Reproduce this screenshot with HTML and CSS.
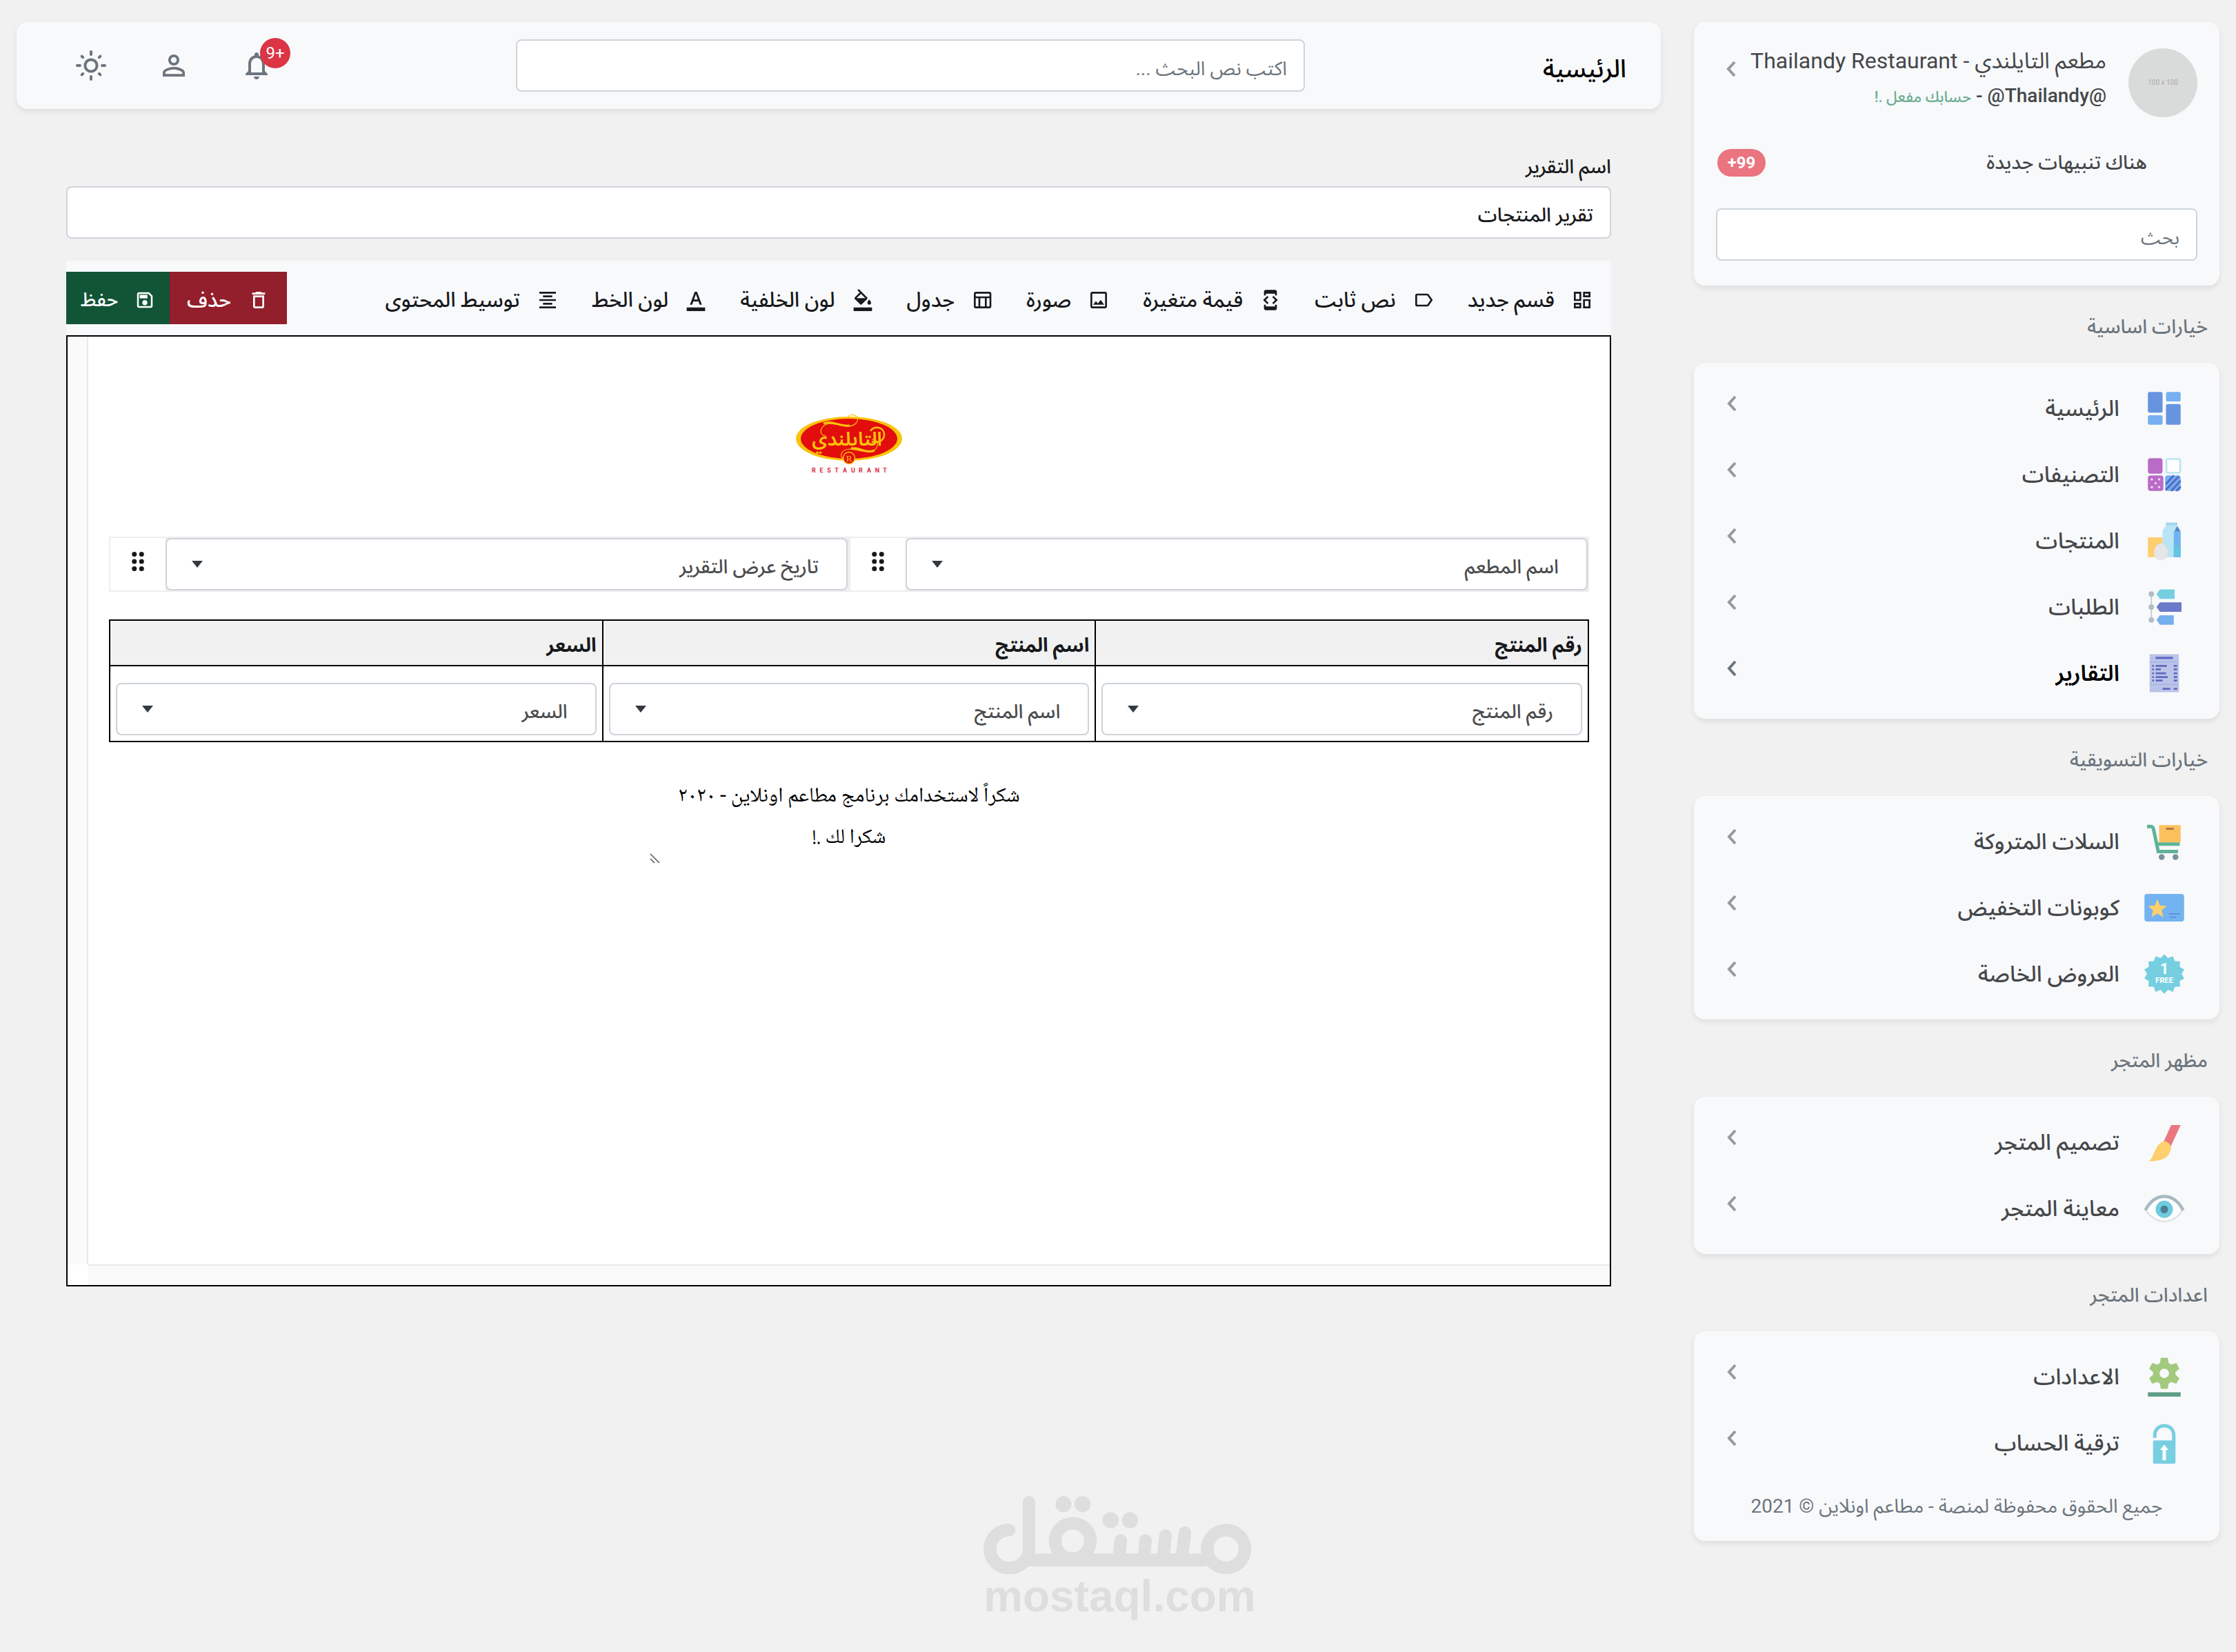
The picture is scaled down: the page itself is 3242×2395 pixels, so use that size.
FILE: index.html
```html
<!DOCTYPE html>
<html lang="ar" dir="rtl">
<head>
<meta charset="utf-8">
<meta name="viewport" content="width=device-width, initial-scale=1">
<title>التقارير - مطاعم اونلاين</title>
<link rel="stylesheet" href="styles.css">
</head>
<body>
<svg class="defs" aria-hidden="true">
  <symbol id="chev" viewBox="0 0 14 24"><path d="M12 2 3 12l9 10" fill="none" stroke="currentColor" stroke-width="4"/></symbol>
  <symbol id="drag" viewBox="0 0 24 24"><g fill="currentColor"><circle cx="9" cy="6" r="2"/><circle cx="15" cy="6" r="2"/><circle cx="9" cy="12" r="2"/><circle cx="15" cy="12" r="2"/><circle cx="9" cy="18" r="2"/><circle cx="15" cy="18" r="2"/></g></symbol>
</svg>

<div class="app">
  <aside class="sidebar">
    <section class="card account">
      <div class="profile">
        <span class="avatar" dir="ltr">100 x 100</span>
        <div class="who">
          <p class="name">مطعم التايلندي - Thailandy Restaurant</p>
          <p class="handle">@Thailandy@ - <span class="active">حسابك مفعل .!</span></p>
        </div>
        <svg class="chev"><use href="#chev"/></svg>
      </div>
      <a class="alerts" href="#alerts"><span>هناك تنبيهات جديدة</span><span class="pill">99+</span></a>
      <input class="field" type="search" placeholder="بحث" aria-label="بحث">
    </section>

    <h2 class="group">خيارات اساسية</h2>
    <nav class="card menu">
      <a class="item" href="#home">
        <svg class="pic" viewBox="0 0 48 48"><g fill="#76b0f1"><rect x="26" y="5" width="17" height="11" rx="2"/><rect x="5" y="32" width="17" height="11" rx="2"/></g><g fill="#6794df"><rect x="5" y="5" width="17" height="24" rx="2"/><rect x="26" y="19" width="17" height="24" rx="2"/></g></svg>
        <span>الرئيسية</span><svg class="chev"><use href="#chev"/></svg></a>
      <a class="item" href="#categories">
        <svg class="pic" viewBox="0 0 48 48"><rect x="5" y="5" width="17" height="18" rx="3" fill="#ba6bc8"/><rect x="26.500" y="6" width="16" height="16" rx="2" fill="#fff" stroke="#b8e4f4" stroke-width="2"/><rect x="5" y="25" width="18" height="18" rx="3" fill="#ba6bc8"/><g fill="#f3e0f6"><circle cx="9.500" cy="29.500" r="1.300"/><circle cx="18" cy="29.500" r="1.300"/><circle cx="14" cy="34" r="1.300"/><circle cx="9.500" cy="38.500" r="1.300"/><circle cx="18" cy="38.500" r="1.300"/></g><rect x="25" y="25" width="18" height="18" rx="3" fill="#72aef0"/><path d="M26 35l9-10M25.500 42 41 26M32 43l11-12M38 43l5-5" stroke="#5768c0" stroke-width="2.200"/></svg>
        <span>التصنيفات</span><svg class="chev"><use href="#chev"/></svg></a>
      <a class="item" href="#products">
        <svg class="pic" viewBox="0 0 48 48"><path d="M5 20h17v23H5z" fill="#fdcf70"/><path d="M26 3h13v4l4 7v29H22V12l4-6z" fill="#b9e4f5"/><path d="M26 3h13v3H26z" fill="#9fd8ee"/><path d="M35 14l4-7 4 7v29h-8z" fill="#6fb4ee"/><path d="M36 13l3-6 4 6z" fill="#5a84cf"/><path d="M35 30h8v13h-8z" fill="#66c3e4"/><path d="M20 27c5 0 8 7 8 11 0 5-3 8.500-8 8.500s-8-3.500-8-8.500c0-4 3-11 8-11z" fill="#e6e6e6"/></svg>
        <span>المنتجات</span><svg class="chev"><use href="#chev"/></svg></a>
      <a class="item" href="#orders">
        <svg class="pic" viewBox="0 0 48 48"><path d="M9 10v28" stroke="#c5ccd2" stroke-width="1.500"/><g fill="#b0bec5"><circle cx="9" cy="9" r="3.200"/><circle cx="9" cy="24" r="3.200"/><circle cx="9" cy="39" r="3.200"/></g><path d="M19 3.500h17v11H19l-4-5.500z" fill="#76cfe0"/><path d="M19 18.500h25v11H19L15 24z" fill="#6a79c8"/><path d="M19 33.500h16v11H19L15 39z" fill="#74afef"/></svg>
        <span>الطلبات</span><svg class="chev"><use href="#chev"/></svg></a>
      <a class="item current" href="#reports" aria-current="page">
        <svg class="pic" viewBox="0 0 48 48"><path d="M7 2h34v44H7z" fill="#bcc3e8"/><path d="M14 5h20v2.500H14z" fill="#5c6bc0"/><path d="M7 11h34M7 37h34" stroke="#7fa6e6" stroke-dasharray="1 1"/><path d="M10 15.500h2m2 0h13m8 0h4M10 19.500h2m2 0h6m15 0h4M10 24h2m2 0h12m9 0h4M10 28.500h2m2 0h14m7 0h4M10 32.500h2m2 0h8m13 0h4M22 42h9m4 0h4" stroke="#5c6bc0" stroke-width="2.200"/></svg>
        <span>التقارير</span><svg class="chev"><use href="#chev"/></svg></a>
    </nav>

    <h2 class="group">خيارات التسويقية</h2>
    <nav class="card menu">
      <a class="item" href="#carts">
        <svg class="pic" viewBox="0 0 48 48"><path d="M18 5h25v20H18z" fill="#fcc15c"/><path d="M26 8h9v2.500h-9z" fill="#b5764a"/><path d="M4 6.500h4.500c2 0 2.500 1 3 3L17 35.500h23" fill="none" stroke="#5fb399" stroke-width="4"/><path d="M16 27h26" stroke="#5fb399" stroke-width="4"/><circle cx="21" cy="42" r="3.400" fill="#78909c"/><circle cx="37" cy="42" r="3.400" fill="#78909c"/></svg>
        <span>السلات المتروكة</span><svg class="chev"><use href="#chev"/></svg></a>
      <a class="item" href="#coupons">
        <svg class="pic" viewBox="0 0 48 48"><rect x="1" y="8" width="46" height="32" rx="3" fill="#74b3f1"/><path d="M16 14l3 7.300 8 .6-6.100 5.100 2 7.900L16 30.600l-6.900 4.300 2-7.900L5 21.900l8-.6z" fill="#fdd06c"/><path d="M29 31h13M30 35h8" stroke="#5580d0"/></svg>
        <span>كوبونات التخفيض</span><svg class="chev"><use href="#chev"/></svg></a>
      <a class="item" href="#offers">
        <svg class="pic" viewBox="0 0 48 48"><path fill="#76cfe1" d="M24 1l4.200 4.600 5.900-2.300 2 5.700 6.300.5-.5 6.300 5.200 3-3 5.200 3 5.200-5.200 3 .5 6.300-6.300.5-2 5.700-5.900-2.300L24 47l-4.200-4.600-5.900 2.300-2-5.700-6.300-.5.500-6.300-5.200-3 3-5.200-3-5.200 5.200-3-.5-6.300 6.300-.5 2-5.700 5.900 2.300z"/><text x="24" y="24" class="offer-one">1</text><text x="24" y="34" class="offer-free">FREE</text></svg>
        <span>العروض الخاصة</span><svg class="chev"><use href="#chev"/></svg></a>
    </nav>

    <h2 class="group">مظهر المتجر</h2>
    <nav class="card menu">
      <a class="item" href="#design">
        <svg class="pic" viewBox="0 0 48 48"><path d="M32 4h11L31 30l-8-6z" fill="#ec7680"/><path d="M23 23c3-1 9 3 9 7-2 11-8 16-26 16 7-4 6-19 17-23z" fill="#fdcf6e"/></svg>
        <span>تصميم المتجر</span><svg class="chev"><use href="#chev"/></svg></a>
      <a class="item" href="#preview">
        <svg class="pic" viewBox="0 0 48 48"><path d="M2 25c6-9 14-14 22-14s16 5 22 14c-6 9-14 14-22 14S8 34 2 25z" fill="#fdfdfd" stroke="#dfe5e8" stroke-width="2"/><path d="M2 26C8 15 15 10 24 10s16 5 22 16" fill="none" stroke="#a9b9c0" stroke-width="3.500"/><circle cx="24" cy="25" r="10" fill="#70cbe0"/><circle cx="24" cy="25" r="4.500" fill="#4a7f92"/></svg>
        <span>معاينة المتجر</span><svg class="chev"><use href="#chev"/></svg></a>
    </nav>

    <h2 class="group">اعدادات المتجر</h2>
    <nav class="card menu">
      <a class="item" href="#settings">
        <svg class="pic" viewBox="0 0 48 48"><path fill="#a3c97c" fill-rule="evenodd" d="M20 2h8l1 6 3 2 6-2 3.500 6.500-4.500 4v3l4.500 4L38 32l-6-2-3 2-1 6h-8l-1-6-3-2-6 2-3.500-6.500 4.500-4v-3l-4.500-4L10 8l6 2 3-2zm4 12.500a5.500 5.500 0 1 0 0 11 5.500 5.500 0 0 0 0-11z"/><path d="M5 42h38v5H5z" fill="#5d9c84"/></svg>
        <span>الاعدادات</span><svg class="chev"><use href="#chev"/></svg></a>
      <a class="item" href="#upgrade">
        <svg class="pic" viewBox="0 0 48 48"><path d="M13 18v-3C13 8 18 4 24 4s11 4 11 11v8" fill="none" stroke="#78cfe2" stroke-width="4"/><rect x="11" y="21" width="26" height="27" rx="2" fill="#78cfe2"/><path d="M24 26l5 6h-3v12h-4V32h-3z" fill="#fff"/></svg>
        <span>ترقية الحساب</span><svg class="chev"><use href="#chev"/></svg></a>
      <p class="copyright">جميع الحقوق محفوظة لمنصة - مطاعم اونلاين © 2021</p>
    </nav>
  </aside>

  <div class="page">
    <header class="card topbar">
      <h1 class="title">الرئيسية</h1>
      <input class="field" type="search" placeholder="اكتب نص البحث ..." aria-label="اكتب نص البحث">
      <div class="tools">
        <button class="tool" type="button" aria-label="التنبيهات"><svg viewBox="0 0 24 24"><path d="M12 22c1.100 0 2-.9 2-2h-4c0 1.100.9 2 2 2zm6-6v-5c0-3.070-1.630-5.640-4.500-6.320V4c0-.83-.67-1.500-1.500-1.500s-1.500.67-1.500 1.500v.68C7.640 5.360 6 7.920 6 11v5l-2 2v1h16v-1l-2-2zm-2 1H8v-6c0-2.480 1.510-4.500 4-4.500s4 2.020 4 4.500v6z"/></svg><span class="count" dir="ltr">9+</span></button>
        <button class="tool" type="button" aria-label="الحساب"><svg viewBox="0 0 24 24"><path d="M12 5.900c1.160 0 2.100.94 2.100 2.100s-.94 2.100-2.100 2.100S9.900 9.160 9.900 8s.94-2.100 2.100-2.100m0 9c2.970 0 6.100 1.460 6.100 2.100v1.100H5.900V17c0-.64 3.130-2.100 6.100-2.100M12 4C9.790 4 8 5.790 8 8s1.790 4 4 4 4-1.790 4-4-1.790-4-4-4zm0 9c-2.670 0-8 1.340-8 4v3h16v-3c0-2.660-5.330-4-8-4z"/></svg></button>
        <button class="tool" type="button" aria-label="المظهر"><svg viewBox="0 0 24 24"><g fill="none" stroke="currentColor" stroke-width="2" stroke-linecap="round"><circle cx="12" cy="12" r="4.300"/><path d="M12 2v2M12 20v2M2 12h2M20 12h2M5.300 5.300l.8.8M17.900 17.900l.8.8M18.700 5.300l-.8.8M6.100 17.900l-.8.8"/></g></svg></button>
      </div>
    </header>

    <main class="report">
      <label class="caption" for="report-name">اسم التقرير</label>
      <input class="field strong" id="report-name" type="text" value="تقرير المنتجات">

      <div class="toolbar" role="toolbar" aria-label="ادوات التقرير">
        <button class="act" type="button"><svg viewBox="0 0 24 24"><path d="M19 5v2h-4V5h4M9 5v6H5V5h4m10 8v6h-4v-6h4M9 17v2H5v-2h4M21 3h-8v6h8V3zM11 3H3v10h8V3zm10 8h-8v10h8V11zm-10 4H3v6h8v-6z"/></svg><span>قسم جديد</span></button>
        <button class="act" type="button"><svg viewBox="0 0 24 24"><path d="M17.630 5.840C17.270 5.330 16.670 5 16 5L5 5.010C3.900 5.010 3 5.900 3 7v10c0 1.100.9 1.990 2 1.990L16 19c.67 0 1.270-.33 1.630-.84L22 12l-4.370-6.160zM16 17H5V7h11l3.550 5L16 17z"/></svg><span>نص ثابت</span></button>
        <button class="act" type="button"><svg viewBox="0 0 24 24"><path d="M7 5h10v2h2V3c0-1.100-.9-1.990-2-1.990L7 1c-1.100 0-2 .9-2 2v4h2V5zm8.410 11.590L20 12l-4.590-4.590L14 8.830 17.170 12 14 15.170l1.410 1.420zM10 15.170L6.830 12 10 8.830 8.590 7.410 4 12l4.590 4.590L10 15.170zM17 19H7v-2H5v4c0 1.100.9 2 2 2h10c1.100 0 2-.9 2-2v-4h-2v2z"/></svg><span>قيمة متغيرة</span></button>
        <button class="act" type="button"><svg viewBox="0 0 24 24"><path d="M19 5v14H5V5h14m0-2H5c-1.100 0-2 .9-2 2v14c0 1.100.9 2 2 2h14c1.100 0 2-.9 2-2V5c0-1.100-.9-2-2-2zm-4.860 8.860l-3 3.870L9 13.140 6 17h12l-3.860-5.140z"/></svg><span>صورة</span></button>
        <button class="act" type="button"><svg viewBox="0 0 24 24"><path d="M20 3H5c-1.100 0-2 .9-2 2v14c0 1.100.9 2 2 2h15c1.100 0 2-.9 2-2V5c0-1.100-.9-2-2-2zm0 2v3H5V5h15zm-5 14h-5v-9h5v9zM5 10h3v9H5v-9zm12 9v-9h3v9h-3z"/></svg><span>جدول</span></button>
        <button class="act" type="button"><svg viewBox="0 0 24 24"><path d="M16.560 8.940L7.620 0 6.210 1.410l2.380 2.380-5.150 5.150c-.59.59-.59 1.540 0 2.120l5.500 5.500c.29.29.68.44 1.060.44s.77-.15 1.060-.44l5.500-5.500c.59-.58.59-1.530 0-2.120zM5.210 10L10 5.210 14.790 10H5.210zM19 11.500s-2 2.170-2 3.500c0 1.100.9 2 2 2s2-.9 2-2c0-1.330-2-3.500-2-3.500zM2 20h20v4H2v-4z"/></svg><span>لون الخلفية</span></button>
        <button class="act" type="button"><svg viewBox="0 0 24 24"><path d="M2 20h20v4H2v-4zm3.490-3h2.420l1.270-3.580h5.650L16.090 17h2.420L13.250 3h-2.500L5.490 17zm4.420-5.610l2.030-5.790h.12l2.030 5.790H9.910z"/></svg><span>لون الخط</span></button>
        <button class="act" type="button"><svg viewBox="0 0 24 24"><path d="M7 15v2h10v-2H7zm-4 6h18v-2H3v2zm0-8h18v-2H3v2zm4-6v2h10V7H7zM3 3v2h18V3H3z"/></svg><span>توسيط المحتوى</span></button>
        <div class="final">
          <button class="act delete" type="button"><svg viewBox="0 0 24 24"><path d="M16 9v10H8V9h8m-1.500-6h-5l-1 1H5v2h14V4h-3.500l-1-1zM18 7H6v12c0 1.100.9 2 2 2h8c1.100 0 2-.9 2-2V7z"/></svg><span>حذف</span></button>
          <button class="act save" type="button"><svg viewBox="0 0 24 24"><path d="M17 3H5c-1.110 0-2 .9-2 2v14c0 1.100.89 2 2 2h14c1.100 0 2-.9 2-2V7l-4-4zm2 16H5V5h11.170L19 7.830V19zm-7-7c-1.660 0-3 1.340-3 3s1.340 3 3 3 3-1.340 3-3-1.340-3-3-3zM6 6h9v4H6z"/></svg><span>حفظ</span></button>
        </div>
      </div>

      <div class="canvas">
        <div class="sheet">
          <svg class="brand" viewBox="0 0 154 84" role="img" aria-label="التايلندي RESTAURANT">
            <ellipse cx="77" cy="35" rx="77" ry="32" fill="#fbc30b"/><ellipse cx="77" cy="35" rx="70" ry="29" fill="#e20d0c"/>
            <g fill="none" stroke="#fbc30b"><path d="M76 6c-2-6 9-8 13-2 2 6-3 13-14 13-14 0-28-10-37 2-5 8 1 12 6 12" stroke-width="1.200"/><path d="M40 13c13-5 25 5 38 3" stroke-width="3"/><path d="M80 49c12-2 22 8 34 3" stroke-width="3"/><path d="M110 36c7-1 9 4 8 9-1 7-10 11-22 8-12-2-24-6-29 2-3 5-1 8 3 9" stroke-width="1.200"/><path d="M108 24c4-8 20-7 20 5 0 9-9 13-18 10" stroke-width="2.500"/></g>
            <text x="74" y="45" class="brand-name">التايلندي</text>
            <circle cx="77" cy="63" r="8.500" fill="#e20d0c" stroke="#fbc30b" stroke-width="1.500"/><text x="77" y="68" class="brand-mark">R</text>
            <g class="brand-sub"><text x="26" y="84">R</text><text x="37" y="84">E</text><text x="48" y="84">S</text><text x="59" y="84">T</text><text x="71" y="84">A</text><text x="83" y="84">U</text><text x="94" y="84">R</text><text x="106" y="84">A</text><text x="118" y="84">N</text><text x="129" y="84">T</text></g>
          </svg>
          <div class="pair">
            <div class="slot"><select class="choice" aria-label="القيمة الاولى"><option>اسم المطعم</option></select><span class="grip"><svg><use href="#drag"/></svg></span></div>
            <div class="slot"><select class="choice" aria-label="القيمة الثانية"><option>تاريخ عرض التقرير</option></select><span class="grip"><svg><use href="#drag"/></svg></span></div>
          </div>
          <table class="grid">
            <thead><tr><th scope="col">رقم المنتج</th><th scope="col">اسم المنتج</th><th scope="col">السعر</th></tr></thead>
            <tbody><tr>
              <td><select class="choice" aria-label="رقم المنتج"><option>رقم المنتج</option></select></td>
              <td><select class="choice" aria-label="اسم المنتج"><option>اسم المنتج</option></select></td>
              <td><select class="choice" aria-label="السعر"><option>السعر</option></select></td>
            </tr></tbody>
          </table>
          <textarea class="note" aria-label="نص ثابت">شكراً لاستخدامك برنامج مطاعم اونلاين - ٢٠٢٠
شكرا لك .!</textarea>
        </div>
        <div class="track side"></div>
        <div class="track foot"></div>
        <div class="corner"></div>
      </div>
    </main>
  </div>
</div>

<div class="watermark" dir="ltr">
  <svg viewBox="138 146 1164 340" role="img" aria-label="مستقل">
    <g fill="none" stroke="#dedede" stroke-width="55" stroke-linecap="round"><path d="M249 293a83 83 0 0 0 0 166c48 0 87-37 87-83V173"/><path d="M735 339l-8 78M843 339l-8 78M930 318l-12 99M1014 305l-13 112"/><circle cx="1193" cy="376" r="82"/><circle cx="526" cy="341" r="77"/></g>
    <path d="M318 396h790v56H318z" fill="#dedede"/>
    <g fill="#dedede"><circle cx="486" cy="181" r="35"/><circle cx="569" cy="181" r="35"/><circle cx="691" cy="251" r="35"/><circle cx="775" cy="251" r="35"/></g>
  </svg>
  <span>mostaql.com</span>
</div>
</body>
</html>
```
FILE: styles.css
```css
*, *::before, *::after { box-sizing: border-box; }

body {
  margin: 0;
  min-height: 100vh;
  background: #f1f1f1;
  color: #17191c;
  font-family: Roboto, "Noto Sans Arabic", "DejaVu Sans", sans-serif;
  font-size: 28px;
  line-height: 48px;
}

h1, h2, p { margin: 0; }
a { color: inherit; text-decoration: none; }
button, input, select, textarea { font: inherit; color: inherit; }
svg { display: block; }
.defs { position: absolute; width: 0; height: 0; }

.app {
  display: grid;
  grid-template-columns: 762px minmax(0, 1fr);
  gap: 48px;
  align-items: start;
  padding: 32px 24px;
}

.card {
  background: #f8f9fb;
  border-radius: 16px;
  box-shadow: 0 4px 8px rgba(0, 0, 0, .08);
}

.field {
  width: 100%;
  height: 76px;
  padding: 8px 24px 0;
  border: 2px solid #ced4da;
  border-radius: 8px;
  background: #fff;
  outline: 0;
}
.field::placeholder { color: #6c757d; opacity: 1; }
.strong, .caption { font-weight: 500; }

/* sidebar */
.account { padding: 38px 32px 36px; color: #45474a; }
.profile { display: flex; gap: 32px; height: 100px; }
.avatar {
  flex: none;
  width: 100px;
  border-radius: 50%;
  background: #d9dada;
  color: #a9abac;
  font-size: 10px;
  line-height: 100px;
  text-align: center;
}
.who { flex: 1; margin-inline-end: -32px; white-space: nowrap; }
.name { font-size: 32px; line-height: 36px; }
.handle { line-height: 66px; font-weight: 500; }
.active { color: #6aae90; font-size: 22px; font-weight: 500; }
.chev { flex: none; width: 14px; height: 24px; margin-bottom: 14px; color: #97999b; }
.profile .chev { margin: 18px 0 0 15px; }

.alerts {
  display: flex;
  align-items: center;
  justify-content: space-between;
  height: 132px;
  padding-inline: 73px 2px;
  font-weight: 500;
}
.pill {
  width: 70px;
  border-radius: 20px;
  background: #ea7480;
  color: #fff;
  font-size: 24px;
  font-weight: 700;
  line-height: 40px;
  text-align: center;
}

.group {
  height: 112px;
  padding-block-start: 4px;
  padding-inline: 17px;
  color: #6c757d;
  font-size: 28px;
  font-weight: 500;
  line-height: 112px;
}

.menu { padding: 18px 0; }
.item {
  display: flex;
  align-items: center;
  gap: 35px;
  height: 96px;
  padding-inline: 50px 48px;
  color: #45474a;
  font-size: 32px;
  font-weight: 500;
}
.item span { flex: 1; }
.item.current { color: #000; font-weight: 600; }
.item.current .chev { color: #6c757d; }
.pic { flex: none; width: 60px; height: 60px; }
.offer-one, .offer-free { fill: #fff; font-weight: 700; text-anchor: middle; direction: ltr; }
.offer-one { font-size: 17px; }
.offer-free { font-size: 9px; }
.copyright { padding: 20px 0 8px; color: #6c757d; text-align: center; }

/* top bar */
.topbar {
  display: grid;
  grid-template-columns: 466fr 1144fr 674fr;
  align-items: center;
  height: 126px;
  padding-inline: 50px;
}
.title { padding-top: 10px; color: #000; font-size: 36px; font-weight: 500; }
.tools { display: flex; justify-content: flex-end; gap: 72px; padding-inline-end: 34px; }
.tool { position: relative; padding: 0; border: 0; background: none; color: #6c757d; }
.tool svg { width: 48px; height: 48px; fill: currentColor; }
.count {
  position: absolute;
  top: -16px;
  left: 29px;
  width: 44px;
  border-radius: 50%;
  background: #dc3545;
  color: #fff;
  font-size: 24px;
  line-height: 44px;
}

/* report editor */
.report { padding: 60px 72px 0; }
.caption { display: block; margin-bottom: 4px; }

.toolbar {
  display: flex;
  align-items: center;
  gap: 48px;
  height: 108px;
  margin-top: 32px;
  padding-inline-start: 26px;
  background: #f8f9fb;
}
.act {
  display: flex;
  align-items: center;
  gap: 24px;
  padding: 6px 0 0;
  border: 0;
  background: none;
  font-size: 30px;
  font-weight: 500;
  white-space: nowrap;
}
.act svg { width: 32px; height: 32px; fill: currentColor; }
.final { display: flex; margin-inline-start: auto; }
.final .act { justify-content: center; height: 76px; color: #fff; }
.delete { width: 170px; background: #921f2b; }
.final .save { width: 150px; background: #125436; font-size: 28px; }
.save svg { width: 30px; height: 30px; }

.canvas {
  display: grid;
  grid-template-columns: minmax(0, 1fr) 30px;
  grid-template-rows: auto 30px;
  border: 2px solid #000;
  background: #fff;
}
.sheet {
  display: flex;
  flex-direction: column;
  min-height: 1345px;
  padding: 113px 30px 40px;
}
.track { background: #fafafa; }
.side { border-right: 2px solid #e8e8e8; }
.foot { border-top: 2px solid #e8e8e8; }
.corner { background: #fff; }

.brand { width: 154px; height: 84px; margin: 0 auto 93px; overflow: visible; }
.brand text { text-anchor: middle; direction: ltr; }
.brand .brand-name { direction: rtl; fill: #fbc30b; font-size: 28px; font-weight: 600; }
.brand-mark { fill: #fbc30b; font-family: "Liberation Serif", serif; font-size: 13px; }
.brand-sub { fill: #d8293c; font-size: 9px; font-weight: 700; }

.pair { display: grid; grid-template-columns: 1fr 1fr; }
.slot { display: flex; border: 2px solid #eee; background: #eee; }
.grip { display: grid; place-items: center; width: 80px; padding-bottom: 8px; background: #fff; }
.grip svg { width: 42px; height: 42px; }

.choice {
  display: block;
  flex: 1;
  width: 100%;
  height: 76px;
  padding: 8px 40px 0;
  border: 2px solid #ced4da;
  border-radius: 8px;
  background: #fff url("data:image/svg+xml,%3Csvg xmlns='http://www.w3.org/2000/svg' width='16' height='10'%3E%3Cpath d='M0 0h16l-8 10z' fill='%23343a40'/%3E%3C/svg%3E") no-repeat left 36px center;
  color: #4a4c4e;
  font-weight: 500;
  appearance: none;
}

.grid {
  width: 100%;
  margin-top: 40px;
  border-collapse: collapse;
  table-layout: fixed;
}
.grid th, .grid td { border: 2px solid #000; }
.grid th { height: 66px; padding: 8px 8px 0; background: #f1f1f1; font-weight: 700; text-align: start; }
.grid td { padding: 24px 8px 8px; }

.note {
  width: 578px;
  height: 140px;
  margin: 36px auto 0;
  padding: 14px 0 0;
  border: 0;
  background: none;
  color: #000;
  font-family: "Noto Naskh Arabic", "DejaVu Sans", serif;
  font-size: 30px;
  line-height: 60px;
  text-align: center;
  resize: both;
  overflow: hidden;
}
.note::-webkit-resizer {
  background: url("data:image/svg+xml,%3Csvg xmlns='http://www.w3.org/2000/svg' width='15' height='15'%3E%3Cpath d='M1 1l13 13M1 8l6 6' stroke='%23555' stroke-width='1.500'/%3E%3C/svg%3E") no-repeat;
}

/* site mark laid over the bottom of the window */
.watermark {
  position: fixed;
  bottom: 49px;
  left: 50%;
  width: 388px;
  margin-left: -195px;
  color: #dedede;
  font-family: "Liberation Sans", sans-serif;
  font-size: 64px;
  font-weight: 700;
  line-height: 64px;
  text-align: center;
  white-space: nowrap;
  pointer-events: none;
}
.watermark svg { width: 100%; }
```
